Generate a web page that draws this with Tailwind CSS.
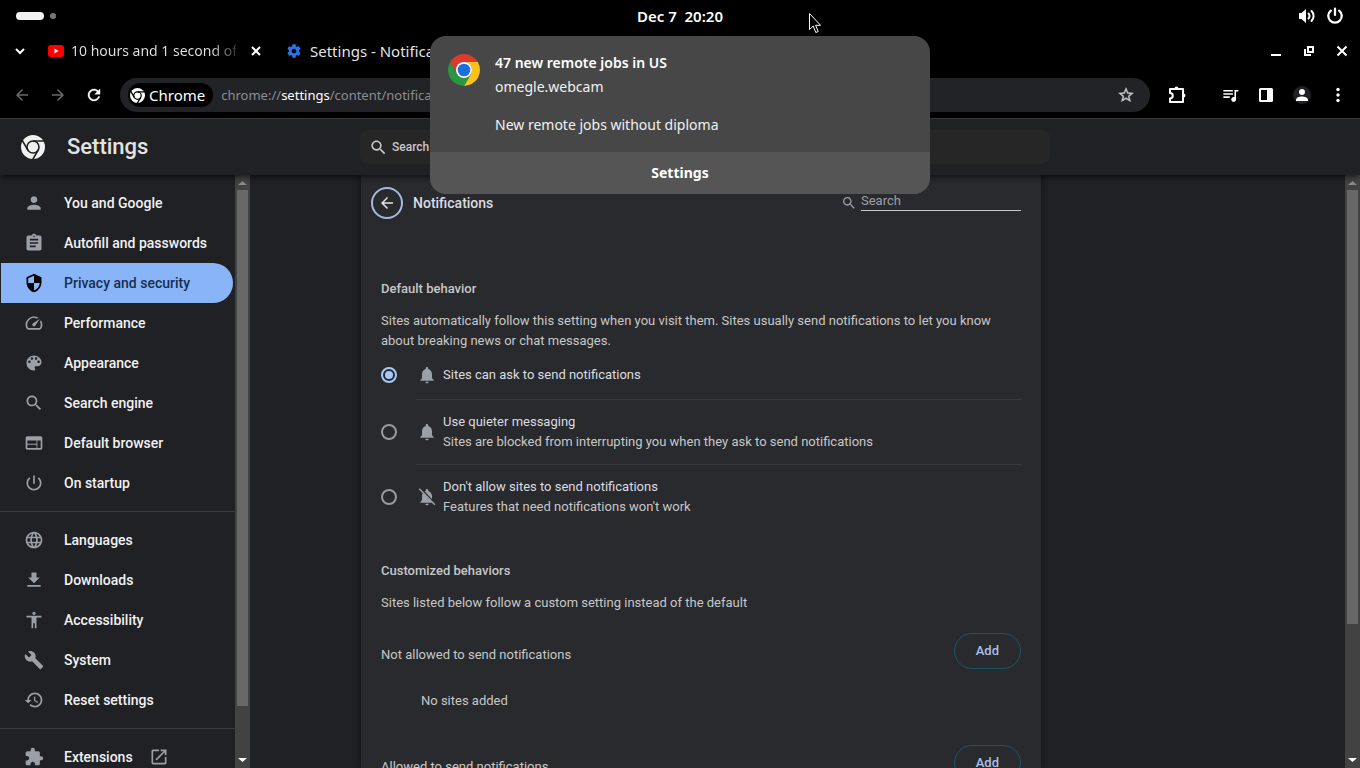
<!DOCTYPE html>
<html lang="en">
<head>
  <meta charset="UTF-8" />
  <meta name="viewport" content="width=device-width, initial-scale=1.0" />
  <title>Settings - Notifications</title>
  <script src="https://cdn.jsdelivr.net/npm/@tailwindcss/browser@4"></script>
</head>
<body class="relative flex h-screen flex-col overflow-hidden bg-black font-[family-name:Roboto,sans-serif] text-[13px] leading-5 text-[#c7c7c7]">

  <!-- Desktop top bar -->
  <header class="grid h-8 shrink-0 grid-cols-3 items-center px-4 font-[family-name:'Noto_Sans',sans-serif] text-white">
    <div class="flex items-center gap-1.5">
      <span class="h-2 w-7 rounded-full bg-[#f2f2f2]"></span>
      <span class="size-1.5 rounded-full bg-[#777777]"></span>
    </div>
    <time class="text-center text-[15px] font-semibold whitespace-pre">Dec 7  20:20</time>
    <div class="flex items-center justify-end gap-2.5">
      <svg class="size-[18px]" viewBox="0 0 18 18" fill="none" stroke="currentColor" stroke-width="2" stroke-linecap="round">
        <path d="M1 6h2.500L8 2v14l-4.500-4H1z" fill="currentColor" stroke="none" />
        <path d="M10.500 6.500a3.500 3.500 0 0 1 0 5M13.500 4a7 7 0 0 1 0 10" />
      </svg>
      <svg class="size-[18px]" viewBox="0 0 16 16" fill="none" stroke="currentColor" stroke-width="2" stroke-linecap="round">
        <path d="M8 1.500v5.500M4.300 3.200a6 6 0 1 0 7.400 0" />
      </svg>
    </div>
  </header>

  <!-- Tab strip -->
  <div class="flex h-10 shrink-0 items-center justify-between pr-3 pb-0.5 pl-[14px] font-[family-name:'Noto_Sans',sans-serif] text-[15px] text-[#e3e3e3]">
    <div class="flex items-center">
      <button aria-label="Search tabs" class="text-white">
        <svg class="size-3" viewBox="0 0 12 12" fill="none" stroke="currentColor" stroke-width="2"><path d="M2 4l4 4 4-4" /></svg>
      </button>
      <div class="ml-[22px] flex items-center">
        <svg class="h-3 w-4" viewBox="0 0 16 12"><rect width="16" height="12" rx="3" fill="#ff0000" /><path d="M6.500 3.500v5l4-2.500z" fill="#fff" /></svg>
        <span class="ml-[7px] w-[165px] overflow-hidden bg-linear-to-r from-[#e3e3e3] from-85% to-[#333333] bg-clip-text text-sm whitespace-nowrap text-transparent">10 hours and 1 second of</span>
        <button aria-label="Close tab" class="ml-[14px] text-white">
          <svg class="size-3" viewBox="0 0 12 12" stroke="currentColor" stroke-width="2"><path d="M2 2l8 8M10 2l-8 8" /></svg>
        </button>
      </div>
      <div class="ml-6 flex items-center gap-2">
        <svg class="size-4" viewBox="0 0 24 24" fill="#2a73e8"><path d="M19.430 12.980c.04-.32.07-.64.07-.98s-.03-.66-.07-.98l2.110-1.650c.19-.15.24-.42.12-.64l-2-3.460c-.12-.22-.39-.3-.61-.22l-2.490 1c-.52-.4-1.080-.73-1.690-.98l-.38-2.650C14.460 2.180 14.250 2 14 2h-4c-.25 0-.46.18-.49.42l-.38 2.650c-.61.25-1.170.59-1.690.98l-2.490-1c-.23-.09-.49 0-.61.22l-2 3.460c-.13.22-.07.49.12.64l2.110 1.650c-.04.32-.07.65-.07.98s.03.66.07.98l-2.110 1.650c-.19.15-.24.42-.12.64l2 3.460c.12.22.39.3.61.22l2.490-1c.52.4 1.080.73 1.690.98l.38 2.650c.03.24.24.42.49.42h4c.25 0 .46-.18.49-.42l.38-2.650c.61-.25 1.170-.59 1.690-.98l2.490 1c.23.09.49 0 .61-.22l2-3.460c.12-.22.07-.49-.12-.64l-2.110-1.650zM12 15.500c-1.930 0-3.500-1.570-3.500-3.500s1.570-3.500 3.500-3.500 3.500 1.570 3.500 3.500-1.570 3.500-3.500 3.500z" /></svg>
        <span>Settings - Notifications</span>
      </div>
    </div>
    <div class="flex items-center gap-[21px] text-white">
      <button aria-label="Minimize"><svg class="size-3" viewBox="0 0 12 12" fill="currentColor"><path d="M1 9h10v2H1z" /></svg></button>
      <button aria-label="Restore"><svg class="size-3" viewBox="0 0 12 12" fill="none" stroke="currentColor" stroke-width="2"><path d="M5 2h5v5H5zM2 4v6h6" /></svg></button>
      <button aria-label="Close"><svg class="size-3" viewBox="0 0 12 12" stroke="currentColor" stroke-width="2"><path d="M1.500 1.500l9 9M10.500 1.500l-9 9" /></svg></button>
    </div>
  </div>

  <!-- Toolbar -->
  <div class="flex h-[47px] shrink-0 items-center border-b border-[#3c3c3c] px-1 text-white">
    <button aria-label="Back" class="flex w-9 justify-center text-[#6a6a6a]"><svg class="size-[18px]" viewBox="0 0 24 24" fill="currentColor"><path d="M20 11H7.830l5.590-5.590L12 4l-8 8 8 8 1.410-1.410L7.830 13H20v-2z" /></svg></button>
    <button aria-label="Forward" class="flex w-9 justify-center text-[#6a6a6a]"><svg class="size-[18px]" viewBox="0 0 24 24" fill="currentColor"><path d="M4 11h12.170l-5.590-5.590L12 4l8 8-8 8-1.410-1.410L16.170 13H4v-2z" /></svg></button>
    <button aria-label="Reload" class="flex w-9 justify-center"><svg class="size-[18px]" viewBox="0 0 24 24" fill="currentColor" stroke="currentColor" stroke-width="0.500"><path d="M17.650 6.350C16.200 4.900 14.210 4 12 4c-4.420 0-7.990 3.580-7.990 8s3.570 8 7.990 8c3.730 0 6.840-2.550 7.730-6h-2.080c-.82 2.330-3.040 4-5.650 4-3.310 0-6-2.690-6-6s2.690-6 6-6c1.660 0 3.140.69 4.220 1.780L13 11h7V4l-2.350 2.350z" /></svg></button>
    <div class="ml-2 flex h-[34px] flex-1 items-center rounded-full bg-[#222326] px-2 font-[family-name:'Noto_Sans',sans-serif] text-[15px]">
      <button class="flex h-6 items-center gap-1 rounded-full bg-black pr-2 pl-0.5">
        <svg class="size-[15px]" viewBox="0 0 24 24"><circle cx="12" cy="12" r="12" fill="#fff" /><g fill="none" stroke="#000" stroke-width="2"><path d="M12 6h12M17.200 15l-6 10.390M6.800 15l-6-10.390" /><circle cx="12" cy="12" r="6" /></g></svg>
        Chrome
      </button>
      <div class="ml-2 flex-1 text-[13px] text-[#8b8d90]">chrome://<span class="text-white">settings</span>/content/notifications</div>
      <button aria-label="Bookmark this tab" class="mr-[7px] text-[#c7c7c7]"><svg class="size-[18px]" viewBox="0 0 24 24" fill="currentColor" stroke="currentColor" stroke-width="0.500"><path d="M22 9.240l-7.190-.62L12 2 9.190 8.630 2 9.240l5.460 4.730L5.820 21 12 17.270 18.180 21l-1.630-7.030L22 9.240zM12 15.400l-3.760 2.270 1-4.280-3.320-2.880 4.380-.38L12 6.100l1.710 4.040 4.380.38-3.320 2.880 1 4.280L12 15.400z" /></svg></button>
    </div>
    <button aria-label="Extensions" class="mr-[17px] ml-[9px] flex w-9 justify-center"><svg class="size-[18px]" viewBox="0 0 18 18" fill="none" stroke="currentColor" stroke-width="2" stroke-linejoin="round"><path d="M2 3h13v13H2v-3.500a2.500 2.500 0 0 0 0-5.500z" /><path d="M6.500 2.500a2 2 0 0 1 4 0zM15.500 7.500a2 2 0 0 1 0 4z" fill="currentColor" stroke="none" /></svg></button>
    <button aria-label="Media controls" class="flex w-9 justify-center"><svg class="size-[19px]" viewBox="0 0 24 24" fill="currentColor"><path d="M15 5H3v2h12V5zm0 4H3v2h12V9zM3 15h8v-2H3v2zM17 5v9.180c-.31-.11-.65-.18-1-.18-1.660 0-3 1.340-3 3s1.340 3 3 3 3-1.340 3-3V7h3V5h-5z" /></svg></button>
    <button aria-label="Side panel" class="flex w-9 justify-center"><svg class="size-4" viewBox="0 0 16 16"><rect x="2" y="2" width="12" height="12" rx="0.500" fill="none" stroke="currentColor" stroke-width="2" /><path d="M9 2h5v12H9z" fill="currentColor" /></svg></button>
    <button aria-label="Profile" class="flex w-9 justify-center"><svg class="size-[18px] rounded-full bg-[#202124]" viewBox="3 3 18 18" fill="currentColor"><path d="M12 12c1.800 0 3-1.200 3-3s-1.200-3-3-3-3 1.200-3 3 1.200 3 3 3zm0 1.500c-2.500 0-6 1.100-6 3.500v1h12v-1c0-2.400-3.500-3.500-6-3.500z" /></svg></button>
    <button aria-label="Menu" class="flex w-9 justify-center"><svg class="size-4" viewBox="0 0 16 16" fill="currentColor"><circle cx="8" cy="2.500" r="1.700" /><circle cx="8" cy="8" r="1.700" /><circle cx="8" cy="13.500" r="1.700" /></svg></button>
  </div>

  <!-- Settings header -->
  <div class="z-10 flex h-14 shrink-0 items-center bg-[#202124] shadow-md shadow-black/40">
    <div class="flex w-[360px] items-center gap-[22px] pl-[21px]">
      <svg class="size-6" viewBox="0 0 24 24"><circle cx="12" cy="12" r="12" fill="#f1f1f1" /><g fill="none" stroke="#202124" stroke-width="1.600"><path d="M12 6h12M17.200 15l-6 10.390M6.800 15l-6-10.390" /><circle cx="12" cy="12" r="6" /></g></svg>
      <h1 class="text-[22px] leading-7 font-medium text-[#e3e3e3]">Settings</h1>
    </div>
    <label class="flex h-[34px] w-full max-w-[690px] items-center gap-1 rounded-lg bg-[#262626] pl-[9px]">
      <svg class="size-[19px] shrink-0" viewBox="0 0 24 24" fill="currentColor"><path d="M15.500 14h-.79l-.28-.27C15.410 12.590 16 11.110 16 9.500 16 5.910 13.090 3 9.500 3S3 5.910 3 9.500 5.910 16 9.500 16c1.610 0 3.090-.59 4.230-1.570l.27.28v.79l5 4.990L20.490 19l-4.990-5zm-6 0C7.010 14 5 11.990 5 9.500S7.010 5 9.500 5 14 7.010 14 9.500 11.990 14 9.500 14z" /></svg>
      <input type="search" aria-label="Search settings" placeholder="Search settings" class="w-full bg-transparent text-xs font-medium outline-none placeholder:text-[#c7c7c7]" />
    </label>
  </div>

  <div class="flex min-h-0 flex-1 bg-[#202124]">
    <!-- Sidebar menu -->
    <nav class="w-[235px] shrink-0 overflow-hidden pt-2 text-sm font-medium text-[#f1f1f1]">
      <a href="#" class="flex h-10 items-center gap-5 pl-6"><svg class="size-5 text-[#9aa0a6]" viewBox="0 0 24 24" fill="currentColor"><path d="M12 12c2.210 0 4-1.790 4-4s-1.790-4-4-4-4 1.790-4 4 1.790 4 4 4zm0 2c-2.670 0-8 1.340-8 4v2h16v-2c0-2.660-5.330-4-8-4z" /></svg>You and Google</a>
      <a href="#" class="flex h-10 items-center gap-5 pl-6"><svg class="size-5 text-[#9aa0a6]" viewBox="0 0 24 24" fill="currentColor"><path d="M19 3h-4.180C14.400 1.840 13.300 1 12 1c-1.300 0-2.400.84-2.820 2H5c-1.100 0-2 .9-2 2v14c0 1.100.9 2 2 2h14c1.100 0 2-.9 2-2V5c0-1.100-.9-2-2-2zm-7 0c.55 0 1 .45 1 1s-.45 1-1 1-1-.45-1-1 .45-1 1-1zm2 14H7v-2h7v2zm3-4H7v-2h10v2zm0-4H7V7h10v2z" /></svg>Autofill and passwords</a>
      <a href="#" aria-current="page" class="mr-0.5 ml-px flex h-10 items-center gap-5 rounded-r-full bg-[#8ab4f8] pl-[23px] text-[#14304f]"><svg class="size-5 text-black" viewBox="0 0 24 24" fill="currentColor"><path d="M12 1L3 5v6c0 5.550 3.840 10.740 9 12 5.160-1.260 9-6.450 9-12V5l-9-4zm0 10.990h7c-.53 4.120-3.280 7.790-7 8.940V12H5V6.300l7-3.110v8.800z" /></svg>Privacy and security</a>
      <a href="#" class="flex h-10 items-center gap-5 pl-6"><svg class="size-5 text-[#9aa0a6]" viewBox="0 0 24 24" fill="currentColor"><path d="M20.380 8.570l-1.230 1.850a8 8 0 0 1-.22 7.580H5.070A8 8 0 0 1 15.580 6.850l1.850-1.230A10 10 0 0 0 3.350 19a2 2 0 0 0 1.720 1h13.850a2 2 0 0 0 1.740-1 10 10 0 0 0-.27-10.440zM10.590 15.410a2 2 0 0 0 2.830 0l5.660-8.490-8.490 5.660a2 2 0 0 0 0 2.830z" /></svg>Performance</a>
      <a href="#" class="flex h-10 items-center gap-5 pl-6"><svg class="size-5 text-[#9aa0a6]" viewBox="0 0 24 24" fill="currentColor"><path d="M12 3c-4.970 0-9 4.030-9 9s4.030 9 9 9c.83 0 1.500-.67 1.500-1.500 0-.39-.15-.74-.39-1.010-.23-.26-.38-.61-.38-.99 0-.83.67-1.500 1.500-1.500H16c2.760 0 5-2.240 5-5 0-4.420-4.030-8-9-8zm-5.500 9c-.83 0-1.500-.67-1.500-1.500S5.670 9 6.500 9 8 9.670 8 10.500 7.330 12 6.500 12zm3-4C8.670 8 8 7.330 8 6.500S8.670 5 9.500 5s1.500.67 1.500 1.500S10.330 8 9.500 8zm5 0c-.83 0-1.500-.67-1.500-1.500S13.670 5 14.500 5s1.500.67 1.500 1.500S15.330 8 14.500 8zm3 4c-.83 0-1.500-.67-1.500-1.500S16.670 9 17.500 9s1.500.67 1.500 1.500-.67 1.500-1.500 1.500z" /></svg>Appearance</a>
      <a href="#" class="flex h-10 items-center gap-5 pl-6"><svg class="size-5 text-[#9aa0a6]" viewBox="0 0 24 24" fill="currentColor"><path d="M15.500 14h-.79l-.28-.27C15.410 12.590 16 11.110 16 9.500 16 5.910 13.090 3 9.500 3S3 5.910 3 9.500 5.910 16 9.500 16c1.610 0 3.090-.59 4.230-1.570l.27.28v.79l5 4.990L20.490 19l-4.990-5zm-6 0C7.010 14 5 11.990 5 9.500S7.010 5 9.500 5 14 7.010 14 9.500 11.990 14 9.500 14z" /></svg>Search engine</a>
      <a href="#" class="flex h-10 items-center gap-5 pl-6"><svg class="size-5 text-[#9aa0a6]" viewBox="0 0 24 24" fill="currentColor"><path d="M20 4H4c-1.100 0-1.990.9-1.990 2L2 18c0 1.100.9 2 2 2h16c1.100 0 2-.9 2-2V6c0-1.100-.9-2-2-2zm-5 14H4v-4h11v4zm0-5H4V9h11v4zm5 5h-4V9h4v9z" /></svg>Default browser</a>
      <a href="#" class="flex h-10 items-center gap-5 pl-6"><svg class="size-5 text-[#9aa0a6]" viewBox="0 0 24 24" fill="currentColor"><path d="M13 3h-2v10h2V3zm4.830 2.170l-1.420 1.420C17.990 7.860 19 9.810 19 12c0 3.870-3.130 7-7 7s-7-3.130-7-7c0-2.190 1.010-4.140 2.580-5.420L6.170 5.170C4.230 6.820 3 9.260 3 12c0 4.970 4.030 9 9 9s9-4.030 9-9c0-2.740-1.230-5.180-3.170-6.830z" /></svg>On startup</a>
      <hr class="my-2 border-[#3a3b3e]" />
      <a href="#" class="flex h-10 items-center gap-5 pl-6"><svg class="size-5 text-[#9aa0a6]" viewBox="0 0 24 24" fill="currentColor"><path d="M11.990 2C6.470 2 2 6.480 2 12s4.470 10 9.990 10C17.520 22 22 17.520 22 12S17.520 2 11.990 2zm6.930 6h-2.950c-.32-1.250-.78-2.450-1.380-3.560 1.840.63 3.370 1.910 4.330 3.560zM12 4.040c.83 1.200 1.480 2.530 1.910 3.960h-3.820c.43-1.430 1.080-2.760 1.910-3.960zM4.260 14C4.100 13.360 4 12.690 4 12s.1-1.360.26-2h3.380c-.08.66-.14 1.320-.14 2 0 .68.06 1.340.14 2H4.260zm.82 2h2.950c.32 1.250.78 2.450 1.380 3.560-1.840-.63-3.370-1.900-4.330-3.560zm2.950-8H5.080c.96-1.660 2.490-2.930 4.330-3.560C8.810 5.550 8.350 6.750 8.030 8zM12 19.960c-.83-1.200-1.480-2.530-1.910-3.960h3.820c-.43 1.430-1.080 2.760-1.910 3.960zM14.340 14H9.660c-.09-.66-.16-1.320-.16-2 0-.68.07-1.350.16-2h4.680c.09.65.16 1.320.16 2 0 .68-.07 1.340-.16 2zm.25 5.560c.6-1.110 1.060-2.310 1.380-3.560h2.950c-.96 1.650-2.490 2.930-4.330 3.560zM16.360 14c.08-.66.14-1.320.14-2 0-.68-.06-1.340-.14-2h3.380c.16.64.26 1.310.26 2s-.1 1.360-.26 2h-3.380z" /></svg>Languages</a>
      <a href="#" class="flex h-10 items-center gap-5 pl-6"><svg class="size-5 text-[#9aa0a6]" viewBox="0 0 24 24" fill="currentColor"><path d="M19 9h-4V3H9v6H5l7 7 7-7zM4 18v2h16v-2H4z" /></svg>Downloads</a>
      <a href="#" class="flex h-10 items-center gap-5 pl-6"><svg class="size-5 text-[#9aa0a6]" viewBox="0 0 24 24" fill="currentColor"><path d="M12 2c1.100 0 2 .9 2 2s-.9 2-2 2-2-.9-2-2 .9-2 2-2zm9 7h-6v13h-2v-6h-2v6H9V9H3V7h18v2z" /></svg>Accessibility</a>
      <a href="#" class="flex h-10 items-center gap-5 pl-6"><svg class="size-5 text-[#9aa0a6]" viewBox="0 0 24 24" fill="currentColor"><path d="M22.700 19l-9.100-9.100c.9-2.300.4-5-1.500-6.900-2-2-5-2.400-7.400-1.300L9 6 6 9 1.600 4.700C.4 7.100.9 10.100 2.900 12.100c1.900 1.900 4.600 2.400 6.900 1.500l9.100 9.100c.4.4 1 .4 1.400 0l2.300-2.300c.5-.4.5-1.100.1-1.400z" /></svg>System</a>
      <a href="#" class="flex h-10 items-center gap-5 pl-6"><svg class="size-5 text-[#9aa0a6]" viewBox="0 0 24 24" fill="currentColor"><path d="M13 3c-4.970 0-9 4.030-9 9H1l3.890 3.890.07.14L9 12H6c0-3.870 3.130-7 7-7s7 3.130 7 7-3.130 7-7 7c-1.930 0-3.680-.79-4.940-2.060l-1.420 1.420C8.270 19.990 10.510 21 13 21c4.970 0 9-4.030 9-9s-4.030-9-9-9zm-1 5v5l4.280 2.540.72-1.210-3.500-2.080V8H12z" /></svg>Reset settings</a>
      <hr class="my-2 border-[#3a3b3e]" />
      <a href="#" class="flex h-10 items-center gap-5 pl-6"><svg class="size-5 text-[#9aa0a6]" viewBox="0 0 24 24" fill="currentColor"><path d="M20.500 11H19V7c0-1.100-.9-2-2-2h-4V3.500C13 2.120 11.880 1 10.500 1S8 2.120 8 3.500V5H4c-1.100 0-1.990.9-1.990 2v3.800H3.500c1.490 0 2.700 1.210 2.700 2.700s-1.210 2.700-2.700 2.700H2V20c0 1.100.9 2 2 2h3.800v-1.500c0-1.490 1.210-2.700 2.700-2.700 1.490 0 2.700 1.210 2.700 2.700V22H17c1.100 0 2-.9 2-2v-4h1.500c1.380 0 2.500-1.120 2.500-2.500S21.880 11 20.500 11z" /></svg>Extensions<svg class="-ml-1 size-5 text-[#9aa0a6]" viewBox="0 0 24 24" fill="currentColor"><path d="M19 19H5V5h7V3H5c-1.110 0-2 .9-2 2v14c0 1.100.89 2 2 2h14c1.100 0 2-.9 2-2v-7h-2v7zM14 3v2h3.590l-9.830 9.830 1.410 1.410L19 6.410V10h2V3h-7z" /></svg></a>
    </nav>
    <!-- Sidebar scrollbar -->
    <div class="flex w-[15px] shrink-0 flex-col items-center bg-[#424242]">
      <svg class="size-[15px] shrink-0" viewBox="0 0 15 15" fill="#8b8b8b"><path d="M3 10h9L7.500 6z" /></svg>
      <div class="w-full flex-1 px-0.5"><div class="bg-[#686868]" style="height: 91.700%"></div></div>
      <svg class="size-[15px] shrink-0" viewBox="0 0 15 15" fill="#fff"><path d="M3 5h9L7.500 9z" /></svg>
    </div>

    <!-- Notifications page -->
    <main class="min-w-0 flex-1 overflow-hidden pl-[111px]">
      <div class="h-full w-full max-w-[680px] overflow-hidden bg-[#292a2d] shadow-[0_0_5px_1px_rgba(0,0,0,0.4)]">
        <div class="flex h-14 items-center gap-2.5 pr-5 pl-2.5">
          <button aria-label="Back to site settings" class="flex size-8 items-center justify-center rounded-full border-2 border-[#a8b8e0] text-[#e3e3e3]"><svg class="size-[18px]" viewBox="0 0 24 24" fill="currentColor"><path d="M20 11H7.830l5.590-5.590L12 4l-8 8 8 8 1.410-1.410L7.830 13H20v-2z" /></svg></button>
          <h2 class="flex-1 text-sm font-medium text-[#dadce0]">Notifications</h2>
          <label class="flex items-end gap-1 pb-1">
            <svg class="size-4 text-[#9aa0a6]" viewBox="0 0 24 24" fill="currentColor"><path d="M15.500 14h-.79l-.28-.27C15.410 12.590 16 11.110 16 9.500 16 5.910 13.090 3 9.500 3S3 5.910 3 9.500 5.910 16 9.500 16c1.610 0 3.090-.59 4.230-1.570l.27.28v.79l5 4.990L20.490 19l-4.990-5zm-6 0C7.010 14 5 11.990 5 9.500S7.010 5 9.500 5 14 7.010 14 9.500 11.990 14 9.500 14z" /></svg>
            <input type="search" aria-label="Search sites" placeholder="Search" class="h-5 w-40 border-b border-[#c7c7c7] bg-transparent outline-none placeholder:text-[#9aa0a6]" />
          </label>
        </div>

        <div class="px-5">
          <h3 class="mt-12 font-medium">Default behavior</h3>
          <p class="mt-3">Sites automatically follow this setting when you visit them. Sites usually send notifications to let you know about breaking news or chat messages.</p>

          <label class="flex h-12 items-center gap-5">
            <input type="radio" name="behavior" checked class="size-4 appearance-none rounded-full border-2 border-[#a8c7fa] bg-[#a8c7fa] bg-clip-content p-0.5" />
            <span class="flex items-center gap-1.5"><svg class="size-5 text-[#9aa0a6]" viewBox="0 0 24 24" fill="currentColor"><path d="M12 22c1.100 0 2-.9 2-2h-4c0 1.100.89 2 2 2zm6-6v-5c0-3.070-1.640-5.640-4.500-6.320V4c0-.83-.67-1.500-1.500-1.500s-1.500.67-1.500 1.500v.68C7.630 5.360 6 7.920 6 11v5l-2 2v1h16v-1l-2-2z" /></svg><span class="text-[#dadce0]">Sites can ask to send notifications</span></span>
          </label>
          <hr class="ml-[35px] border-[#3a3b3e]" />
          <label class="flex h-16 items-center gap-5">
            <input type="radio" name="behavior" class="size-4 appearance-none rounded-full border-2 border-[#9a9a9a]" />
            <span class="flex items-center gap-1.5"><svg class="size-5 text-[#9aa0a6]" viewBox="0 0 24 24" fill="currentColor"><path d="M12 22c1.100 0 2-.9 2-2h-4c0 1.100.89 2 2 2zm6-6v-5c0-3.070-1.640-5.640-4.500-6.320V4c0-.83-.67-1.500-1.500-1.500s-1.500.67-1.500 1.500v.68C7.630 5.360 6 7.920 6 11v5l-2 2v1h16v-1l-2-2z" /></svg><span><span class="block text-[#dadce0]">Use quieter messaging</span><span class="block">Sites are blocked from interrupting you when they ask to send notifications</span></span></span>
          </label>
          <hr class="ml-[35px] border-[#3a3b3e]" />
          <label class="flex h-16 items-center gap-5">
            <input type="radio" name="behavior" class="size-4 appearance-none rounded-full border-2 border-[#9a9a9a]" />
            <span class="flex items-center gap-1.5"><svg class="size-5 text-[#9aa0a6]" viewBox="0 0 24 24" fill="currentColor"><path d="M20 18.690L7.840 6.140 3.270 1.490 2 2.760l4.800 4.800v.01c-.52.99-.8 2.160-.8 3.420v5l-2 2v1h13.730l3 3L22 20.720l-2-2.030zM12 22c1.110 0 2-.89 2-2h-4c0 1.110.89 2 2 2zm6-7.320V11c0-3.080-1.640-5.640-4.500-6.320V4c0-.83-.67-1.500-1.500-1.500s-1.500.67-1.500 1.500v.68c-.15.03-.29.08-.42.12-.1.03-.2.07-.3.11-.25.09-.48.21-.71.32L18 14.680z" /></svg><span><span class="block text-[#dadce0]">Don't allow sites to send notifications</span><span class="block">Features that need notifications won't work</span></span></span>
          </label>

          <h3 class="mt-8 font-medium">Customized behaviors</h3>
          <p class="mt-3">Sites listed below follow a custom setting instead of the default</p>

          <div class="mt-5 flex h-9 items-center justify-between">
            <h4 class="pt-2">Not allowed to send notifications</h4>
            <button class="h-9 rounded-full border border-[#1d5568] px-[21px] font-medium text-[#a8c0ea]">Add</button>
          </div>
          <p class="mt-[22px] pl-10">No sites added</p>
          <div class="mt-[34px] flex h-9 items-center justify-between">
            <h4 class="pt-2">Allowed to send notifications</h4>
            <button class="h-9 rounded-full border border-[#1d5568] px-[21px] font-medium text-[#a8c0ea]">Add</button>
          </div>
        </div>
      </div>
    </main>
    <!-- Page scrollbar -->
    <div class="flex w-[15px] shrink-0 flex-col items-center bg-[#424242]">
      <svg class="size-[15px] shrink-0" viewBox="0 0 15 15" fill="#8b8b8b"><path d="M3 10h9L7.500 6z" /></svg>
      <div class="w-full flex-1 px-0.5"><div class="bg-[#686868]" style="height: 77%"></div></div>
      <svg class="size-[15px] shrink-0" viewBox="0 0 15 15" fill="#fff"><path d="M3 5h9L7.500 9z" /></svg>
    </div>
  </div>

  <!-- Desktop notification -->
  <section class="absolute inset-x-0 top-9 z-20 mx-auto w-[500px] overflow-hidden rounded-2xl bg-[#474747] font-[family-name:'Noto_Sans',sans-serif] text-sm text-[#f1f1f1]">
    <div class="flex h-[116px] gap-[15px] px-[18px] pt-[18px]">
      <svg class="size-8" viewBox="0 0 48 48">
        <path d="M24 12H44.780A24 24 0 0 0 3.220 12L13.610 30A12 12 0 0 1 24 12z" fill="#dd3a2c" />
        <path d="M24 12H44.780A24 24 0 0 0 3.220 12L13.610 30A12 12 0 0 1 24 12z" fill="#fcc21b" transform="rotate(120 24 24)" />
        <path d="M24 12H44.780A24 24 0 0 0 3.220 12L13.610 30A12 12 0 0 1 24 12z" fill="#2a9542" transform="rotate(240 24 24)" />
        <circle cx="24" cy="24" r="12" fill="#fff" />
        <circle cx="24" cy="24" r="9.500" fill="#1a6fe0" />
      </svg>
      <div class="-mt-[3px]">
        <h2 class="leading-6 font-semibold text-white">47 new remote jobs in US</h2>
        <p class="leading-6">omegle.webcam</p>
        <p class="mt-[14px] leading-6">New remote jobs without diploma</p>
      </div>
    </div>
    <button class="h-[42px] w-full bg-[#555555] font-bold text-white">Settings</button>
  </section>

  <!-- Mouse pointer -->
  <svg class="absolute top-3 left-[808px] z-30 h-[22px] w-[14px]" viewBox="0 0 14 22" fill="#000" stroke="#fff"><path d="M1.500 1.500v16l3.700-3.500 2.600 6.500 2.400-1-2.600-6.200h5z" /></svg>
</body>
</html>
